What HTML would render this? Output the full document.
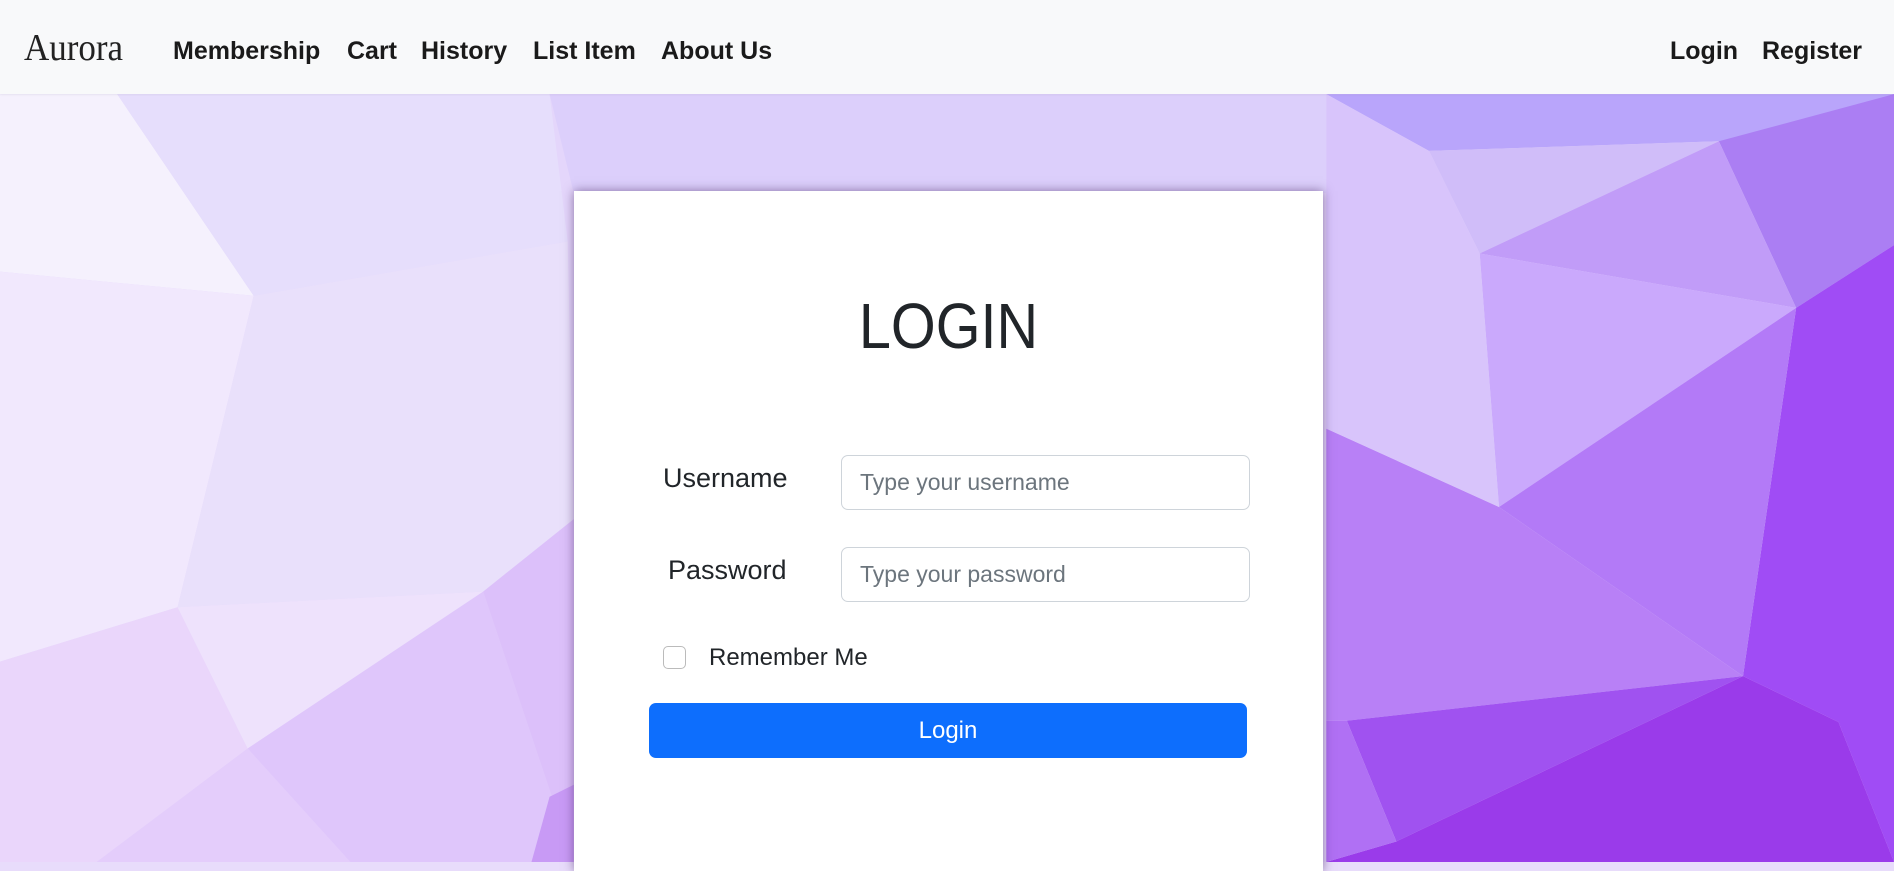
<!DOCTYPE html>
<html><head><meta charset="utf-8"><style>
*{margin:0;padding:0;box-sizing:border-box}
body{width:1894px;height:862px;overflow:hidden;position:relative;font-family:"Liberation Sans",sans-serif;background:#e8dcfb}
svg.bg{position:absolute;left:0;top:0;width:1894px;height:862px}
.nav{position:absolute;left:0;top:0;width:1894px;height:94px;background:#f8f9fa;box-shadow:0 1px 2px rgba(0,0,0,.05)}
.nav span{position:absolute;top:34px;font-weight:bold;font-size:25px;color:#1a1a1a;line-height:34px}
.brand{position:absolute;left:24px;top:27px;font-family:"Liberation Serif",serif;font-size:38px;color:#222;line-height:42px;transform:scaleX(0.92);transform-origin:left}
.card{position:absolute;left:574px;top:191px;width:749px;height:680px;background:#fff;box-shadow:0 0 10px rgba(60,30,90,.55)}
.title{position:absolute;left:0;width:749px;top:95px;text-align:center;font-size:64px;color:#212529;line-height:80px;transform:scaleX(0.9)}
.lbl{position:absolute;font-size:27px;color:#212529;line-height:30px}
.inp{position:absolute;left:267px;width:409px;height:55px;border:1px solid #ced4da;border-radius:7px;font-size:23px;color:#6c757d;padding-left:18px;line-height:53px}
.cb{position:absolute;left:89px;top:455px;width:23px;height:23px;border:1px solid #bbb;border-radius:5px}
.rm{position:absolute;left:135px;top:452px;font-size:24px;color:#212529;line-height:30px}
.btn{position:absolute;left:75px;top:512px;width:598px;height:55px;background:#0d6efd;border-radius:7px;color:#fff;font-size:24px;text-align:center;line-height:55px}
</style></head><body>
<svg class="bg" viewBox="0 0 1568 714" preserveAspectRatio="none">
<rect width="1568" height="714" fill="#e4d6fb"/>
<polygon points="0,78 97,78 210,245 0,225" fill="#f5f1fd"/>
<polygon points="97,78 455,78 470,200 210,245" fill="#e6defc"/>
<polygon points="0,225 210,245 147,503 0,548" fill="#f1e8fd"/>
<polygon points="210,245 470,200 475,430 400,490 147,503" fill="#e9e0fb"/>
<polygon points="0,548 147,503 205,620 80,714 0,714" fill="#ead6fb"/>
<polygon points="147,503 400,490 205,620" fill="#eee2fc"/>
<polygon points="205,620 400,490 475,714 290,714" fill="#dfc6fb"/>
<polygon points="80,714 205,620 290,714" fill="#e4cdfb"/>
<polygon points="400,490 475,430 475,714" fill="#dcc0fa"/>
<polygon points="455,660 475,650 475,714 440,714" fill="#c89af5"/>
<polygon points="455,78 1098,78 1098,160 475,160" fill="#dccffb"/>
<polygon points="1098,78 1568,78 1568,203 1423,117 1183,125" fill="#b9a5fb"/>
<polygon points="1183,125 1423,117 1225,210" fill="#d0bdf9"/>
<polygon points="1423,117 1568,78 1568,203 1487,255" fill="#ab7ef3"/>
<polygon points="1225,210 1423,117 1487,255" fill="#c19cf8"/>
<polygon points="1225,210 1487,255 1241,420" fill="#caa9fc"/>
<polygon points="1487,255 1568,203 1568,714 1522,598 1443,560" fill="#a04cf5"/>
<polygon points="1241,420 1487,255 1443,560" fill="#b37af7"/>
<polygon points="1098,355 1241,420 1443,560 1115,597 1098,597" fill="#b880f6"/>
<polygon points="1098,78 1183,125 1225,210 1241,420 1098,355" fill="#d8c4fb"/>
<polygon points="1115,597 1443,560 1156,697" fill="#a052f0"/>
<polygon points="1156,697 1443,560 1522,598 1568,714 1098,714" fill="#9a3bea"/>
<polygon points="1098,597 1115,597 1156,697 1098,714" fill="#b070f4"/>
</svg>
<div class="nav">
<div class="brand">Aurora</div>
<span style="left:173px">Membership</span>
<span style="left:347px">Cart</span>
<span style="left:421px">History</span>
<span style="left:533px">List Item</span>
<span style="left:661px">About Us</span>
<span style="left:1670px">Login</span>
<span style="left:1762px">Register</span>
</div>
<div class="card">
<div class="title">LOGIN</div>
<div class="lbl" style="left:89px;top:272px">Username</div>
<div class="inp" style="top:264px">Type your username</div>
<div class="lbl" style="left:94px;top:364px">Password</div>
<div class="inp" style="top:356px">Type your password</div>
<div class="cb"></div>
<div class="rm">Remember Me</div>
<div class="btn">Login</div>
</div>
</body></html>
